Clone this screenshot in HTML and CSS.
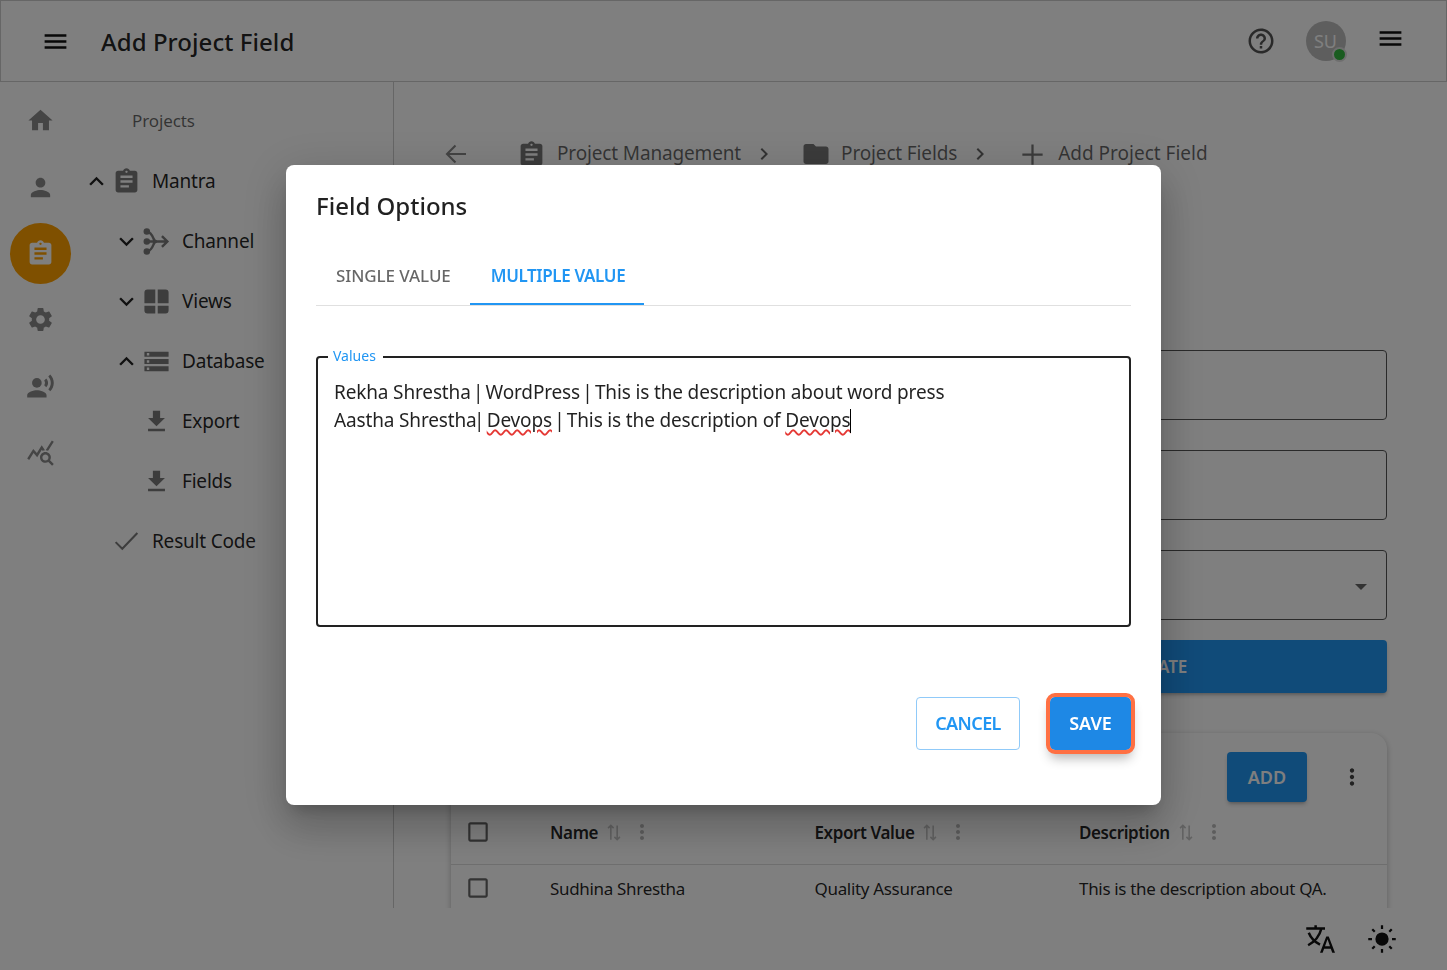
FILE: index.html
```html
<!DOCTYPE html>
<html lang="en">
<head>
<meta charset="utf-8">
<title>Add Project Field</title>
<link rel="stylesheet" href="styles.css">
</head>
<body>
<svg class="sprite" aria-hidden="true">
  <symbol id="i-menu" viewBox="0 0 24 24"><path d="M3 18h18v-2H3v2zm0-5h18v-2H3v2zm0-7v2h18V6H3z"/></symbol>
  <symbol id="i-home" viewBox="0 0 24 24"><path d="M10 20v-6h4v6h5v-8h3L12 3 2 12h3v8z"/></symbol>
  <symbol id="i-person" viewBox="0 0 24 24"><path d="M12 12c2.21 0 4-1.79 4-4s-1.79-4-4-4-4 1.79-4 4 1.79 4 4 4zm0 2c-2.67 0-8 1.34-8 4v2h16v-2c0-2.66-5.33-4-8-4z"/></symbol>
  <symbol id="i-assign" viewBox="0 0 24 24"><path d="M19 3h-4.18C14.4 1.84 13.3 1 12 1c-1.3 0-2.4.84-2.82 2H5c-1.1 0-2 .9-2 2v14c0 1.1.9 2 2 2h14c1.1 0 2-.9 2-2V5c0-1.1-.9-2-2-2zm-7 0c.55 0 1 .45 1 1s-.45 1-1 1-1-.45-1-1 .45-1 1-1zm2 14H7v-2h7v2zm3-4H7v-2h10v2zm0-4H7V7h10v2z"/></symbol>
  <symbol id="i-settings" viewBox="0 0 24 24"><path d="M19.14 12.94c.04-.3.06-.61.06-.94 0-.32-.02-.64-.07-.94l2.03-1.58c.18-.14.23-.41.12-.61l-1.92-3.32c-.12-.22-.37-.29-.59-.22l-2.39.96c-.5-.38-1.03-.7-1.62-.94l-.36-2.54c-.04-.24-.24-.41-.48-.41h-3.84c-.24 0-.43.17-.47.41l-.36 2.54c-.59.24-1.13.57-1.62.94l-2.39-.96c-.22-.08-.47 0-.59.22L2.74 8.87c-.12.21-.08.47.12.61l2.03 1.58c-.05.3-.09.63-.09.94s.02.64.07.94l-2.03 1.58c-.18.14-.23.41-.12.61l1.92 3.32c.12.22.37.29.59.22l2.39-.96c.5.38 1.03.7 1.62.94l.36 2.54c.05.24.24.41.48.41h3.84c.24 0 .44-.17.47-.41l.36-2.54c.59-.24 1.13-.56 1.62-.94l2.39.96c.22.08.47 0 .59-.22l1.92-3.32c.12-.22.07-.47-.12-.61l-2.01-1.58zM12 15.6c-1.98 0-3.6-1.62-3.6-3.6s1.62-3.6 3.6-3.6 3.6 1.62 3.6 3.6-1.62 3.6-3.6 3.6z"/></symbol>
  <symbol id="i-voice" viewBox="0 0 24 24"><circle cx="9" cy="9" r="4"/><path d="M9 15c-2.67 0-8 1.34-8 4v2h16v-2c0-2.66-5.33-4-8-4zm7.76-9.64l-1.68 1.69c.84 1.18.84 2.71 0 3.89l1.68 1.69c2.02-2.02 2.02-5.07 0-7.27zM20.07 2l-1.63 1.63c2.77 3.02 2.77 7.56 0 10.74L20.07 16c3.9-3.89 3.91-9.95 0-14z"/></symbol>
  <symbol id="i-stats" viewBox="0 0 24 24"><path d="M19.88 18.47c.44-.7.7-1.51.7-2.39 0-2.49-2.01-4.5-4.5-4.5s-4.5 2.01-4.5 4.5 2.01 4.5 4.49 4.5c.88 0 1.7-.26 2.39-.7L21.58 23 23 21.58l-3.12-3.11zm-3.8.11c-1.38 0-2.5-1.12-2.5-2.5s1.12-2.5 2.5-2.5 2.5 1.12 2.5 2.5-1.12 2.5-2.5 2.5zm-.36-8.5c-.74.02-1.45.18-2.1.45l-.55-.83-3.8 6.18-3.01-3.52-3.63 5.81L1 17l5-8 3 3.5L13 6l2.72 4.08zm2.59.5c-.64-.28-1.33-.45-2.05-.49L21.38 2 23 3.18l-4.69 7.4z"/></symbol>
  <symbol id="i-less" viewBox="0 0 24 24"><path d="M12 8l-6 6 1.41 1.41L12 10.83l4.59 4.58L18 14z"/></symbol>
  <symbol id="i-more" viewBox="0 0 24 24"><path d="M16.59 8.59L12 13.17 7.41 8.59 6 10l6 6 6-6z"/></symbol>
  <symbol id="i-channel" viewBox="0 0 24 24"><circle cx="4" cy="3.800" r="2.700"/><circle cx="4" cy="12" r="2.700"/><circle cx="4" cy="20.200" r="2.700"/><path d="M4 3.800C7.500 4.200 8.500 7 9.500 9.500c.5 1.400 1.500 2.500 3 2.500h8M4 12h16.500M4 20.200c3.500-.4 4.500-3.200 5.500-5.700.5-1.400 1.500-2.500 3-2.500M16.500 7.500L21 12l-4.500 4.500" fill="none" stroke="currentColor" stroke-width="2"/></symbol>
  <symbol id="i-views" viewBox="0 0 24 24"><path d="M2 4.500A2.500 2.500 0 0 1 4.500 2H11v11.500H2zM13 2h6.500A2.500 2.500 0 0 1 22 4.500v9H13zM2 15.500h9V22H4.500A2.500 2.500 0 0 1 2 19.500zM13 15.500h9v4a2.500 2.500 0 0 1-2.500 2.500H13z"/></symbol>
  <symbol id="i-storage" viewBox="0 0 24 24"><path d="M2 20h20v-4H2v4zm2-3h2v2H4v-2zM2 4v4h20V4H2zm4 3H4V5h2v2zm-4 7h20v-4H2v4zm2-3h2v2H4v-2z"/></symbol>
  <symbol id="i-download" viewBox="0 0 24 24"><path d="M19 9h-4V3H9v6H5l7 7 7-7zM5 18v2h14v-2H5z"/></symbol>
  <symbol id="i-check" viewBox="0 0 24 24"><path d="M3 12.500l5.500 5.500L21 5" fill="none" stroke="currentColor" stroke-width="1.700"/></symbol>
  <symbol id="i-help" viewBox="0 0 24 24"><path d="M11 18h2v-2h-2v2zm1-16C6.480 2 2 6.480 2 12s4.480 10 10 10 10-4.480 10-10S17.520 2 12 2zm0 18c-4.410 0-8-3.590-8-8s3.590-8 8-8 8 3.590 8 8-3.590 8-8 8zm0-14c-2.210 0-4 1.790-4 4h2c0-1.100.9-2 2-2s2 .9 2 2c0 2-3 1.750-3 5h2c0-2.250 3-2.500 3-5 0-2.210-1.790-4-4-4z"/></symbol>
  <symbol id="i-back" viewBox="0 0 24 24"><path d="M22 12H3M11.500 3.500L3 12l8.500 8.500" fill="none" stroke="currentColor" stroke-width="2.100"/></symbol>
  <symbol id="i-chev" viewBox="0 0 24 24"><path d="M10 6L8.590 7.410 13.170 12l-4.580 4.590L10 18l6-6z"/></symbol>
  <symbol id="i-folder" viewBox="0 0 24 24"><path d="M10 4H4c-1.100 0-1.990.9-1.990 2L2 18c0 1.100.9 2 2 2h16c1.100 0 2-.9 2-2V8c0-1.100-.9-2-2-2h-8l-2-2z"/></symbol>
  <symbol id="i-add" viewBox="0 0 24 24"><path d="M21 13h-8v8h-2v-8H3v-2h8V3h2v8h8v2z"/></symbol>
  <symbol id="i-dots" viewBox="0 0 24 24"><path d="M12 8c1.100 0 2-.9 2-2s-.9-2-2-2-2 .9-2 2 .9 2 2 2zm0 2c-1.100 0-2 .9-2 2s.9 2 2 2 2-.9 2-2-.9-2-2-2zm0 6c-1.100 0-2 .9-2 2s.9 2 2 2 2-.9 2-2-.9-2-2-2z"/></symbol>
  <symbol id="i-sort" viewBox="0 0 24 24"><path d="M8 21V3M4.500 6.500L8 3l3.500 3.500M16 3v18M12.500 17.500L16 21l3.500-3.500" fill="none" stroke="currentColor" stroke-width="2"/></symbol>
  <symbol id="i-box" viewBox="0 0 24 24"><path d="M19 5v14H5V5h14m0-2H5c-1.100 0-2 .9-2 2v14c0 1.100.9 2 2 2h14c1.100 0 2-.9 2-2V5c0-1.100-.9-2-2-2z"/></symbol>
  <symbol id="i-translate" viewBox="0 0 24 24"><path d="M1 3.500h15M8.500 1v2.500M3 7c2 5 6 8 9 9.500M13 4c-1.500 6-5 10-10.500 13" fill="none" stroke="currentColor" stroke-width="2"/><path d="M17 10h2l5 13h-2.200l-1.200-3.300h-5.300L14.100 23H12zm-1 7.800h4l-2-5.600z"/></symbol>
  <symbol id="i-sun" viewBox="0 0 24 24"><circle cx="12" cy="12" r="5.300"/><path d="M12 1v3M12 20v3M1 12h3M20 12h3M4.200 4.200l2 2M17.800 17.800l2 2M4.200 19.800l2-2M17.800 6.200l2-2" fill="none" stroke="currentColor" stroke-width="1.800"/></symbol>
</svg>

<div class="app">
  <header class="topbar">
    <svg class="ico menu-ico"><use href="#i-menu"/></svg>
    <h1 class="page-title">Add Project Field</h1>
    <svg class="ico help-ico"><use href="#i-help"/></svg>
    <div class="avatar">SU<span class="status"></span></div>
    <svg class="ico menu-ico end-menu"><use href="#i-menu"/></svg>
  </header>

  <div class="workspace">
    <nav class="rail">
      <a class="rail-item"><svg class="ico rail-ico"><use href="#i-home"/></svg></a>
      <a class="rail-item"><svg class="ico rail-ico"><use href="#i-person"/></svg></a>
      <a class="rail-item"><span class="rail-active"><svg class="ico rail-ico"><use href="#i-assign"/></svg></span></a>
      <a class="rail-item"><svg class="ico rail-ico"><use href="#i-settings"/></svg></a>
      <a class="rail-item"><svg class="ico rail-ico"><use href="#i-voice"/></svg></a>
      <a class="rail-item"><svg class="ico rail-ico"><use href="#i-stats"/></svg></a>
    </nav>

    <aside class="tree">
      <div class="tree-heading">Projects</div>
      <div class="tree-row"><svg class="ico chev"><use href="#i-less"/></svg><svg class="ico node"><use href="#i-assign"/></svg><span>Mantra</span></div>
      <div class="tree-row lvl1"><svg class="ico chev"><use href="#i-more"/></svg><svg class="ico node"><use href="#i-channel"/></svg><span>Channel</span></div>
      <div class="tree-row lvl1"><svg class="ico chev"><use href="#i-more"/></svg><svg class="ico node"><use href="#i-views"/></svg><span>Views</span></div>
      <div class="tree-row lvl1"><svg class="ico chev"><use href="#i-less"/></svg><svg class="ico node"><use href="#i-storage"/></svg><span>Database</span></div>
      <div class="tree-row lvl1"><i class="chev"></i><svg class="ico node"><use href="#i-download"/></svg><span>Export</span></div>
      <div class="tree-row lvl1"><i class="chev"></i><svg class="ico node"><use href="#i-download"/></svg><span>Fields</span></div>
      <div class="tree-row"><i class="chev"></i><svg class="ico node"><use href="#i-check"/></svg><span>Result Code</span></div>
    </aside>

    <main class="content">
      <div class="crumbs">
        <svg class="ico crumb-back"><use href="#i-back"/></svg>
        <svg class="ico crumb-assign"><use href="#i-assign"/></svg><span class="crumb-text first">Project Management</span>
        <svg class="ico crumb-chev"><use href="#i-chev"/></svg>
        <svg class="ico crumb-folder"><use href="#i-folder"/></svg><span class="crumb-text second">Project Fields</span>
        <svg class="ico crumb-chev"><use href="#i-chev"/></svg>
        <svg class="ico crumb-add"><use href="#i-add"/></svg><span class="crumb-text third">Add Project Field</span>
      </div>

      <form class="form">
        <div class="input"></div>
        <div class="input"></div>
        <div class="input select"><span class="caret-down"></span></div>
        <button type="button" class="create">CREATE</button>
      </form>

      <section class="card">
        <div class="card-tools">
          <button type="button" class="add">ADD</button>
          <svg class="ico tools-dots"><use href="#i-dots"/></svg>
        </div>
        <div class="table-row head">
          <svg class="ico box"><use href="#i-box"/></svg>
          <div class="cell"><b>Name</b><svg class="ico sort"><use href="#i-sort"/></svg><svg class="ico col-dots"><use href="#i-dots"/></svg></div>
          <div class="cell"><b>Export Value</b><svg class="ico sort"><use href="#i-sort"/></svg><svg class="ico col-dots"><use href="#i-dots"/></svg></div>
          <div class="cell"><b>Description</b><svg class="ico sort"><use href="#i-sort"/></svg><svg class="ico col-dots"><use href="#i-dots"/></svg></div>
        </div>
        <div class="table-row">
          <svg class="ico box"><use href="#i-box"/></svg>
          <div class="cell">Sudhina Shrestha</div>
          <div class="cell">Quality Assurance</div>
          <div class="cell">This is the description about QA.</div>
        </div>
      </section>
    </main>
  </div>

  <footer class="bottombar">
    <svg class="ico foot-ico"><use href="#i-translate"/></svg>
    <svg class="ico foot-ico"><use href="#i-sun"/></svg>
  </footer>
</div>

<div class="backdrop">
  <div class="dialog" role="dialog">
    <h2 class="dialog-title">Field Options</h2>
    <div class="tabs">
      <div class="tab">SINGLE VALUE</div>
      <div class="tab active">MULTIPLE VALUE</div>
    </div>
    <fieldset class="values">
      <legend>Values</legend>
      <div class="values-text">Rekha Shrestha <span class="sep">|</span> WordPress <span class="sep">|</span> This is the description about word press<br>Aastha Shrestha<span class="sep">|</span> <span class="misspelt">Devops</span> <span class="sep">|</span> This is the description of <span class="misspelt">Devops</span><span class="text-caret"></span></div>
    </fieldset>
    <div class="dialog-actions">
      <button type="button" class="btn-cancel">CANCEL</button>
      <button type="button" class="btn-save">SAVE</button>
    </div>
  </div>
</div>
</body>
</html>
```
FILE: styles.css
```css
* { box-sizing: border-box; }
html, body { margin: 0; height: 100%; }
body {
  font-family: "Noto Sans", "Open Sans", sans-serif;
  color: rgba(0, 0, 0, .87);
  background: #fff;
  overflow: hidden;
}
.sprite { display: none; }
.ico { display: block; flex: none; width: 24px; height: 24px; fill: currentColor; }

.app { height: 970px; display: flex; flex-direction: column; }

/* top bar */
.topbar {
  height: 82px;
  flex: none;
  display: flex;
  align-items: center;
  border: 1px solid #ccc;
  padding: 0 41px 0 40px;
}
.menu-ico { width: 29px; height: 29px; color: #111; }
.page-title { margin: 0 0 0 31px; font-size: 24px; font-weight: 500; letter-spacing: .05px; flex: 1; }
.help-ico { width: 30px; height: 30px; color: #555; }
.avatar {
  position: relative;
  width: 40px; height: 40px;
  margin-left: 30px;
  border-radius: 50%;
  background: #bdbdbd;
  color: #fff;
  font-size: 18px;
  display: flex; align-items: center; justify-content: center;
}
.status {
  position: absolute; right: -1px; bottom: -1px;
  width: 15px; height: 15px;
  border-radius: 50%;
  background: #34b840;
  border: 2px solid #ddd;
}
.end-menu { margin-left: 30.500px; margin-top: -6px; }

.workspace { flex: 1; min-height: 0; display: flex; }

/* icon rail */
.rail { width: 82px; flex: none; padding: 5.500px 1px 0 0; display: flex; flex-direction: column; }
.rail-item { height: 66.400px; flex: none; display: flex; align-items: center; justify-content: center; }
.rail-ico { width: 29px; height: 29px; color: #8a8a8a; }
.rail-active {
  width: 61px; height: 61px;
  border-radius: 50%;
  background: #ffa000;
  display: flex; align-items: center; justify-content: center;
}
.rail-active .rail-ico { color: #fff; }

/* tree */
.tree { width: 312px; flex: none; border-right: 1px solid #ccc; padding-top: 9px; font-size: 19px; letter-spacing: -.2px; }
.tree-heading { height: 60px; padding: 0 0 2px 50px; display: flex; align-items: center; font-size: 17px; letter-spacing: -.1px; color: rgba(0,0,0,.6); }
.tree-row { height: 60px; display: flex; align-items: center; padding-left: 0; }
.tree-row.lvl1 { padding-left: 30px; }
.chev { display: block; flex: none; width: 29px; height: 29px; color: #222; }
.node { width: 29px; height: 29px; margin: 0 11px 0 1px; color: #7a7a7a; }

/* main */
.content { flex: 1; min-width: 0; overflow: hidden; padding: 0 60px 0 57px; }
.crumbs { display: flex; align-items: center; height: 40px; margin-top: 52px; font-size: 19px; letter-spacing: -.15px; color: rgba(0,0,0,.6); }
.crumb-back { margin-left: -7px; color: #888; }
.crumb-assign { width: 29px; height: 29px; margin-left: 48.500px; color: #777; }
.crumb-folder { width: 30px; height: 30px; margin-left: 25px; color: #777; }
.crumb-add { width: 27px; height: 27px; margin-left: 26.500px; color: #777; }
.crumb-text { margin-bottom: 2px; }
.crumb-text.first { margin-left: 11.500px; }
.crumb-text.second { margin-left: 10px; }
.crumb-text.third { margin-left: 12.500px; letter-spacing: 0; }
.crumb-chev { margin-left: 11px; color: #666; }

.form { margin-top: 176px; display: flex; flex-direction: column; gap: 30px; }
.input { height: 70px; border: 1px solid #555; border-radius: 4px; position: relative; }
.caret-down {
  position: absolute; right: 19px; top: 33px;
  border: 6px solid transparent; border-top-color: #666; border-bottom: 0;
}
.create {
  margin-top: -10px;
  align-self: flex-end;
  width: 460px; height: 53px;
  border: 0; border-radius: 4px;
  background: #2196f3; color: #fff;
  font: 600 17px "Noto Sans", sans-serif;
  box-shadow: 0 3px 3px -2px rgba(0,0,0,.2), 0 3px 4px rgba(0,0,0,.14);
}
.card {
  margin-top: 40px;
  padding-bottom: 60px;
  border-radius: 16px;
  background: #fff;
  box-shadow: 0 2px 6px rgba(0,0,0,.25);
}
.card-tools { height: 67px; padding: 19px 22px 0 0; display: flex; justify-content: flex-end; align-items: flex-start; }
.add {
  width: 80px; height: 50px;
  border: 0; border-radius: 4px;
  background: #2196f3; color: #fff;
  font: 600 18px "Noto Sans", sans-serif;
  box-shadow: 0 3px 3px -2px rgba(0,0,0,.2), 0 3px 4px rgba(0,0,0,.14);
}
.tools-dots { margin: 12px 0 0 32px; width: 26px; height: 26px; color: #444; }
.table-row { display: flex; align-items: center; height: 46px; padding-left: 14px; font-size: 17px; letter-spacing: -.32px; }
.table-row.head { height: 65px; border-bottom: 1px solid #ddd; background: #fff; letter-spacing: -.4px; }
.box { width: 26px; height: 26px; margin-right: 59px; color: #666; }
.cell { width: 264.500px; display: flex; align-items: center; }
.cell b { font-weight: 600; }
.sort { width: 20px; height: 19px; margin-left: 6px; color: #c4c4c4; }
.col-dots { width: 24px; height: 24px; margin-left: 6px; color: #bbb; }

/* footer */
.bottombar { height: 62px; flex: none; background: #fff; display: flex; justify-content: flex-end; align-items: center; gap: 32px; padding-right: 50px; position: relative; }
.foot-ico { width: 30px; height: 30px; color: #111; }

/* dialog */
.backdrop {
  position: fixed; inset: 0;
  background: rgba(0, 0, 0, .5);
  display: flex; align-items: center; justify-content: center;
}
.dialog {
  width: 875px; height: 640px;
  padding: 22px 30px 0;
  background: #fff;
  border-radius: 8px;
  display: flex; flex-direction: column;
  box-shadow: 0 11px 15px -7px rgba(0,0,0,.2), 0 24px 38px 3px rgba(0,0,0,.14), 0 9px 46px 8px rgba(0,0,0,.12);
}
.dialog-title { margin: 0; font-size: 24px; line-height: 38px; font-weight: 500; }
.tabs { margin-top: 22px; height: 59px; flex: none; display: flex; border-bottom: 1px solid #e0e0e0; }
.tab { padding: 0 19px 0 20px; height: 58px; display: flex; align-items: center; border-bottom: 2px solid transparent; font-size: 17px; font-weight: 500; letter-spacing: -.08px; color: rgba(0,0,0,.6); }
.tab.active { padding: 0 19px 0 21px; color: #2196f3; border-bottom-color: #2196f3; font-weight: 600; letter-spacing: -.38px; }
.values {
  margin: 42px 0 0;
  padding: 12px 16px 0;
  height: 279px;
  flex: none;
  border: 2px solid #222;
  border-radius: 4px;
  min-width: 0;
}
.values legend { padding: 0 7px 2px 5px; margin-left: -6px; font-size: 14px; line-height: 16px; color: #2196f3; }
.values-text { font-size: 19px; letter-spacing: -.15px; line-height: 28px; white-space: nowrap; }
.sep { margin: 0 -2.500px; }
.misspelt { text-decoration: underline wavy #e53935 1.500px; text-underline-offset: 2px; }
.text-caret { display: inline-block; width: 1px; height: 24px; background: #000; vertical-align: -6px; }
.dialog-actions { margin-top: 70px; display: flex; justify-content: flex-end; gap: 30px; align-items: center; }
.btn-cancel, .btn-save { height: 53px; padding: 0 0 2px; border-radius: 4px; font: 600 18px "Noto Sans", sans-serif; }
.btn-cancel { width: 104px; background: #fff; color: #2196f3; border: 1px solid #90caf9; letter-spacing: -.6px; }
.btn-save {
  width: 81px; border: 0;
  background: #1e88e5; color: #fff;
  border-radius: 5px;
  outline: 4px solid #ff7043;
  box-shadow: 0 8px 12px rgba(0,0,0,.3);
}
```
